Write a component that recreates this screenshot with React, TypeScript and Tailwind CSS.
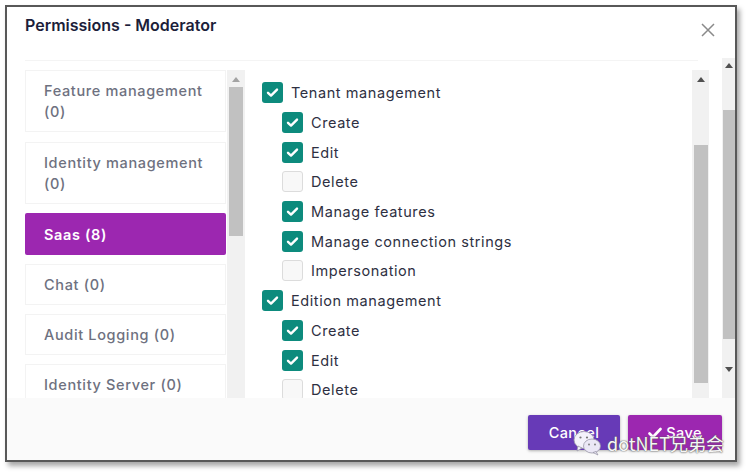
import React from "react";

const font = { fontFamily: 'Inter, "Noto Sans", "Noto Sans CJK SC", sans-serif' };

function Check({ checked }: { checked: boolean }) {
  if (!checked)
    return <div className="w-[21px] h-[21px] rounded-[3px] border border-[#dcdcdc] bg-[#f8f8f8] shrink-0" />;
  return (
    <div className="w-[21px] h-[21px] rounded-[3px] bg-[#0d8b7d] shrink-0 flex items-center justify-center">
      <svg width="21" height="21" viewBox="0 0 21 21">
        <polyline points="6,10.8 9,13.6 15,7.6" fill="none" stroke="#fff" strokeWidth="2.4" strokeLinecap="round" strokeLinejoin="round" />
      </svg>
    </div>
  );
}

function Up({ color }: { color: string }) {
  return (
    <svg width="8" height="5" viewBox="0 0 8 5">
      <polygon points="0,5 4,0 8,5" fill={color} />
    </svg>
  );
}
function Down({ color }: { color: string }) {
  return (
    <svg width="8" height="5" viewBox="0 0 8 5">
      <polygon points="0,0 4,5 8,0" fill={color} />
    </svg>
  );
}

const rows: { label: string; level: 1 | 2; checked: boolean }[] = [
  { label: "Tenant management", level: 1, checked: true },
  { label: "Create", level: 2, checked: true },
  { label: "Edit", level: 2, checked: true },
  { label: "Delete", level: 2, checked: false },
  { label: "Manage features", level: 2, checked: true },
  { label: "Manage connection strings", level: 2, checked: true },
  { label: "Impersonation", level: 2, checked: false },
  { label: "Edition management", level: 1, checked: true },
  { label: "Create", level: 2, checked: true },
  { label: "Edit", level: 2, checked: true },
  { label: "Delete", level: 2, checked: false },
];

export default function App() {
  return (
    <div className="relative w-[750px] h-[476px] bg-white overflow-hidden" style={font}>
      <div className="absolute left-[5px] top-[5px] w-[732px] h-[457px] border-2 border-[#585858] bg-white shadow-[3px_4px_5px_rgba(0,0,0,0.35)] flex flex-col">
        <div className="flex h-[391px]">
          <div className="w-[715px] flex flex-col">
            <div className="h-[53px] flex items-start justify-between pl-[18px] pr-[6px]">
              <div className="mt-[6px] text-[16px] leading-[24px] font-semibold text-[#1c1e3a]">
                Permissions - Moderator
              </div>
              <svg className="mt-[15px]" width="16" height="16" viewBox="0 0 16 16">
                <path d="M2 2 L14 14 M14 2 L2 14" stroke="#8a8a8a" strokeWidth="1.5" />
              </svg>
            </div>
            <div className="ml-[18px] w-[673px] h-px bg-[#f4f4f4]" />
            <div className="flex flex-1 pl-[18px] pt-[9px] overflow-hidden">
              <div className="w-[201px] flex flex-col overflow-hidden text-[14.5px] leading-[21px] font-medium text-[#6e7180] tracking-[0.045em] whitespace-nowrap">
                <div className="border border-[#f3f3f3] py-[9px] pl-[18px] pr-2 mb-[10px] shrink-0">
                  Feature management
                  <br />
                  (0)
                </div>
                <div className="border border-[#f3f3f3] py-[9px] pl-[18px] pr-2 mb-[9px] shrink-0">
                  Identity management
                  <br />
                  (0)
                </div>
                <div className="h-[42px] bg-[#9c27b0] rounded-[2px] flex items-center pl-[19px] text-white font-semibold mb-[9px] shrink-0">
                  Saas (8)
                </div>
                <div className="border border-[#f3f3f3] py-[9px] pl-[18px] mb-[9px] shrink-0">Chat (0)</div>
                <div className="border border-[#f3f3f3] py-[9px] pl-[18px] mb-[9px] shrink-0">Audit Logging (0)</div>
                <div className="border border-[#f3f3f3] py-[9px] pl-[18px] mb-[9px] shrink-0">Identity Server (0)</div>
              </div>
              <div className="ml-px w-[18px] bg-[#f1f1f1] flex flex-col items-center">
                <div className="h-[17px] flex items-center justify-center pt-[1px]">
                  <Up color="#a3a3a3" />
                </div>
                <div className="w-[14px] h-[149px] bg-[#c1c1c1]" />
              </div>
              <div className="flex-1 pt-[8px] pl-[17px] overflow-hidden">
                {rows.map((r, i) => (
                  <div
                    key={i}
                    className={`h-[29.7px] flex items-center gap-[8px] ${r.level === 2 ? "pl-[20px]" : ""}`}
                  >
                    <Check checked={r.checked} />
                    <span className="text-[14.5px] leading-[21px] text-[#2e3042] tracking-[0.04em] whitespace-nowrap">{r.label}</span>
                  </div>
                ))}
              </div>
              <div className="w-[17px] bg-[#f1f1f1] flex flex-col items-center">
                <div className="h-[17px] flex items-center justify-center pt-[1px]">
                  <Up color="#505050" />
                </div>
                <div className="mt-[58px] w-[14px] h-[238px] bg-[#c1c1c1]" />
              </div>
              <div className="w-[13px]" />
            </div>
          </div>
          <div className="w-[13px] mt-[51px] bg-[#f1f1f1] flex flex-col items-center">
            <div className="h-[15px] flex items-center justify-center">
              <Up color="#505050" />
            </div>
            <div className="mt-[37px] w-[12px] h-[229px] bg-[#c1c1c1] ml-px" />
            <div className="mt-[25px] h-[10px] flex items-center justify-center">
              <Down color="#505050" />
            </div>
          </div>
        </div>
        <div className="flex-1 bg-[#fafafa] flex items-start justify-end pr-[13px] pt-[17px] gap-[8px]">
          <div className="w-[92px] h-[35px] bg-[#673ab7] rounded-[2px] shadow-[0_1px_3px_rgba(0,0,0,0.3)] flex items-center justify-center text-white text-[14.5px] font-medium tracking-[0.03em]">
            Cancel
          </div>
          <div className="w-[94px] h-[35px] bg-[#9c27b0] rounded-[2px] shadow-[0_1px_3px_rgba(0,0,0,0.3)] flex items-center justify-center gap-[4px] text-white text-[14.5px] font-medium tracking-[0.03em]">
            <svg width="14" height="14" viewBox="0 0 14 14">
              <path d="M1.5 7.5 L5 11 L12.5 3" fill="none" stroke="#fff" strokeWidth="2.6" strokeLinecap="round" strokeLinejoin="round" />
            </svg>
            Save
          </div>
        </div>
      </div>
      <div className="absolute left-[573px] top-[430px] flex items-center gap-[5px]">
        <svg width="29" height="26" viewBox="0 0 29 26">
          <ellipse cx="11" cy="10" rx="10" ry="8.5" fill="#f4f2fb" stroke="#9a98a8" strokeWidth="0.8" />
          <path d="M5 16 L4 21 L9 18 Z" fill="#f4f2fb" stroke="#9a98a8" strokeWidth="0.8" />
          <ellipse cx="19" cy="16" rx="8.5" ry="7" fill="#ebe8f6" stroke="#9a98a8" strokeWidth="0.8" />
          <path d="M23 21.5 L25 25 L20 22.5 Z" fill="#ebe8f6" stroke="#9a98a8" strokeWidth="0.8" />
          <circle cx="7.5" cy="7.5" r="1.1" fill="#777" />
          <circle cx="14" cy="7.5" r="1.1" fill="#777" />
          <circle cx="16" cy="14.5" r="0.9" fill="#777" />
          <circle cx="22" cy="14.5" r="0.9" fill="#777" />
        </svg>
        <span
          className="text-[18px] leading-[22px] text-[#f6f6f6] whitespace-nowrap"
          style={{
            fontFamily: '"Noto Sans CJK SC", sans-serif',
            textShadow: "0 0 1px #555, 0 0 2px #666",
          }}
        >
          dotNET兄弟会
        </span>
      </div>
    </div>
  );
}
